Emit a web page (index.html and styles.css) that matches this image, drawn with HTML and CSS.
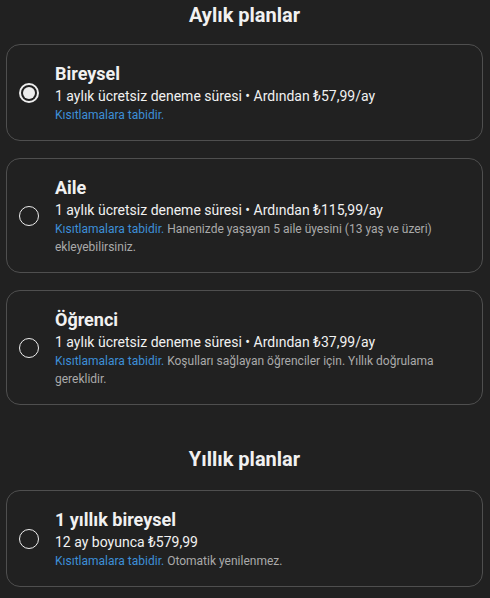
FILE: index.html
```html
<!DOCTYPE html>
<html lang="tr">
<head>
<meta charset="utf-8">
<link rel="stylesheet" href="styles.css">
</head>
<body>
<main class="page">
  <h2 class="section-title">Aylık planlar</h2>
  <div class="plans">
    <label class="plan">
      <span class="radio selected"></span>
      <span class="info">
        <span class="name">Bireysel</span>
        <span class="price">1 aylık ücretsiz deneme süresi • Ardından ₺57,99/ay</span>
        <span class="desc"><span class="link">Kısıtlamalara tabidir.</span></span>
      </span>
    </label>
    <label class="plan">
      <span class="radio"></span>
      <span class="info">
        <span class="name">Aile</span>
        <span class="price">1 aylık ücretsiz deneme süresi • Ardından ₺115,99/ay</span>
        <span class="desc"><span class="link">Kısıtlamalara tabidir.</span> Hanenizde yaşayan 5 aile üyesini (13 yaş ve üzeri) ekleyebilirsiniz.</span>
      </span>
    </label>
    <label class="plan">
      <span class="radio"></span>
      <span class="info">
        <span class="name">Öğrenci</span>
        <span class="price">1 aylık ücretsiz deneme süresi • Ardından ₺37,99/ay</span>
        <span class="desc"><span class="link">Kısıtlamalara tabidir.</span> Koşulları sağlayan öğrenciler için. Yıllık doğrulama gereklidir.</span>
      </span>
    </label>
  </div>
  <h2 class="section-title second">Yıllık planlar</h2>
  <div class="plans">
    <label class="plan">
      <span class="radio"></span>
      <span class="info">
        <span class="name">1 yıllık bireysel</span>
        <span class="price">12 ay boyunca ₺579,99</span>
        <span class="desc"><span class="link">Kısıtlamalara tabidir.</span> Otomatik yenilenmez.</span>
      </span>
    </label>
  </div>
</main>
</body>
</html>
```

FILE: styles.css
```css
html, body {
  margin: 0;
  padding: 0;
  background: #212121;
}
body {
  font-family: Roboto, "Noto Sans", sans-serif;
  color: #f1f1f1;
}
.page {
  padding: 1px 7px 0 6px;
}
.section-title {
  margin: 0 0 15px;
  text-align: center;
  font-size: 20px;
  line-height: 28px;
  font-weight: 700;
  color: #f1f1f1;
}
.section-title.second {
  margin-top: 40px;
  margin-bottom: 17px;
}
.plans {
  display: flex;
  flex-direction: column;
  gap: 17px;
}
.plan {
  display: flex;
  align-items: center;
  gap: 16px;
  border: 1px solid #4f4f4f;
  border-radius: 14px;
  padding: 17px 20px 16px 12px;
}
.radio {
  flex: none;
  width: 20px;
  height: 20px;
  box-sizing: border-box;
  border: 1.5px solid #eeeeee;
  border-radius: 50%;
  position: relative;
}
.radio.selected {
  border-width: 2px;
}
.radio.selected::after {
  content: "";
  position: absolute;
  left: 2px;
  top: 2px;
  width: 12px;
  height: 12px;
  border-radius: 50%;
  background: #eeeeee;
}
.info {
  display: flex;
  flex-direction: column;
  min-width: 0;
}
.name {
  font-size: 18px;
  line-height: 24px;
  font-weight: 700;
  color: #f1f1f1;
}
.price {
  font-size: 14px;
  line-height: 20px;
  color: #f1f1f1;
}
.desc {
  display: block;
  font-size: 12px;
  line-height: 18px;
  color: #aaaaaa;
}
.link {
  color: #3d8fd8;
}
```
